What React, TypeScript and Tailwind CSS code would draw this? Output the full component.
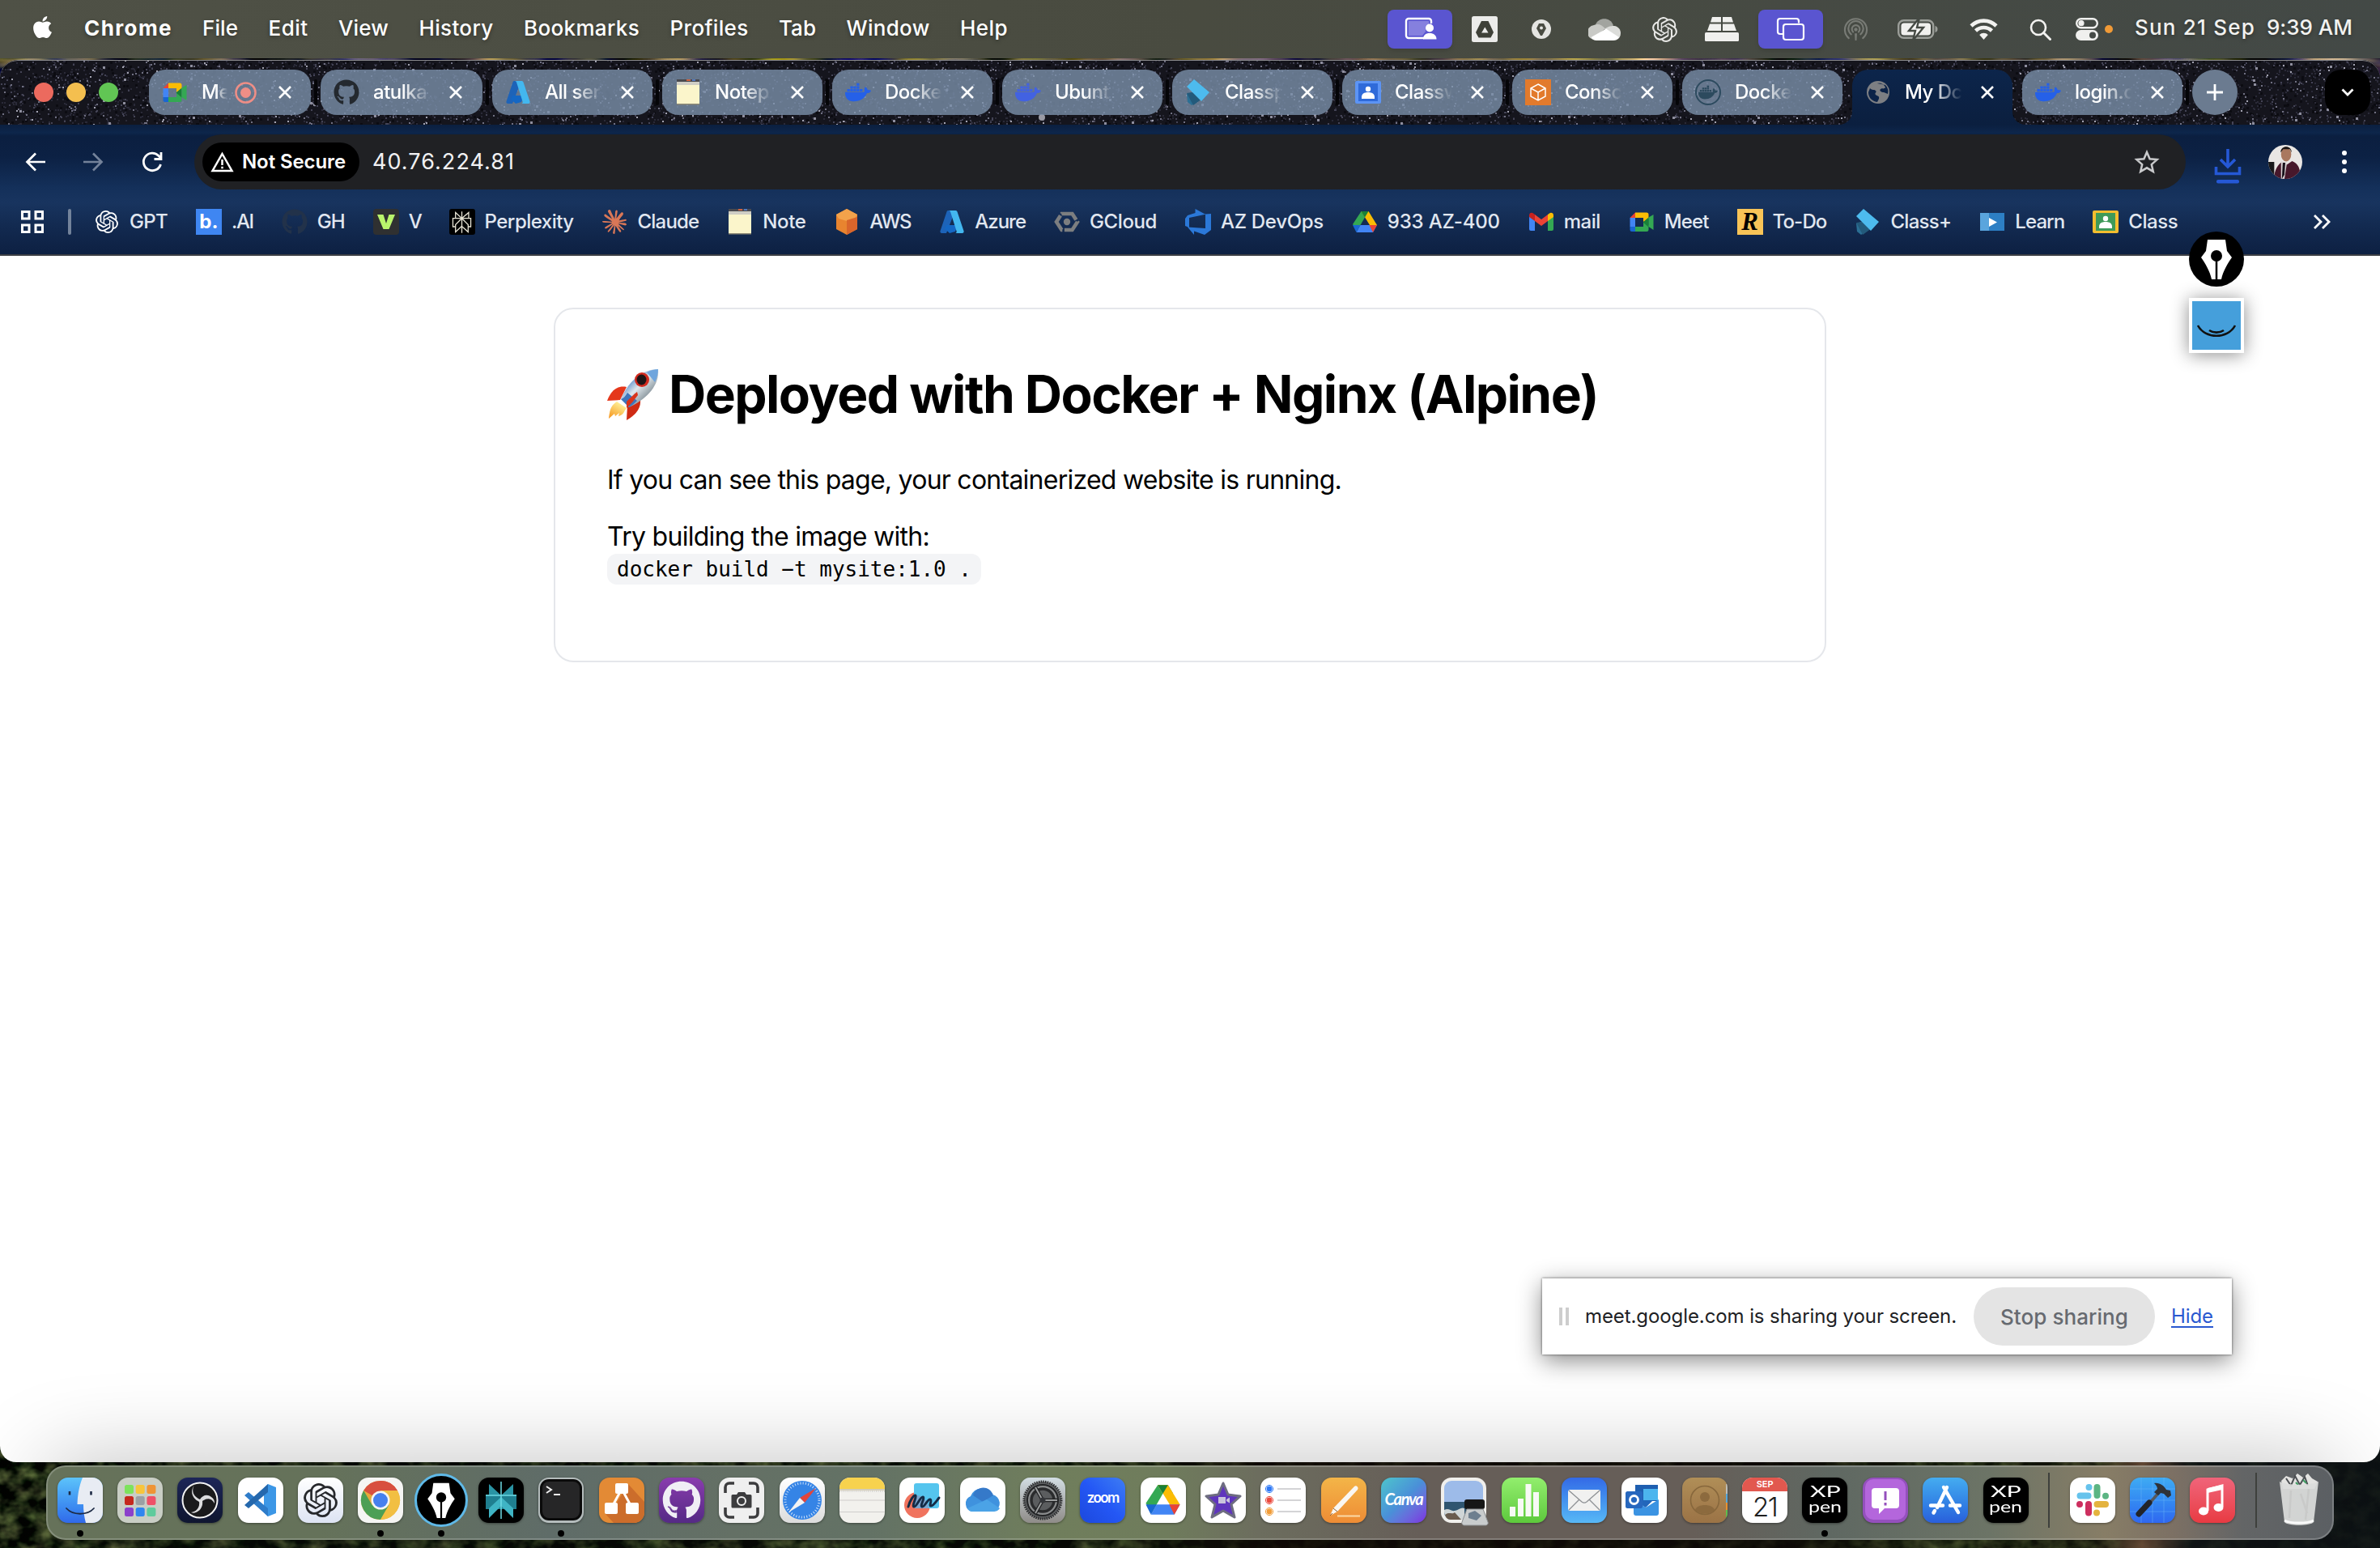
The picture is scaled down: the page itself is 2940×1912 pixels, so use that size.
import React, { useLayoutEffect, useRef, useState } from "react";
import { FaApple, FaGithub, FaDocker } from "react-icons/fa";
import { SiOpenai, SiPerplexity, SiClaude } from "react-icons/si";

type Kids = { children?: React.ReactNode; className?: string };

/** Single-line text whose tracking is adjusted so that it spans `w` pixels. */
function Fit({ w, className = "", children }: { w: number; className?: string; children: string }) {
  const ref = useRef<HTMLSpanElement>(null);
  const [ls, setLs] = useState(0);
  useLayoutEffect(() => {
    if (ref.current) setLs((w - ref.current.getBoundingClientRect().width) / children.length);
  }, []);
  return (
    <span ref={ref} className={`inline-block shrink-0 whitespace-pre ${className}`} style={{ letterSpacing: ls }}>
      {children}
    </span>
  );
}

function Svg({ children, className = "size-8", vb = "0 0 32 32" }: Kids & { vb?: string }) {
  return (
    <svg viewBox={vb} className={`block shrink-0 ${className}`} fill="none">
      {children}
    </svg>
  );
}

/* ---------- starfield ---------- */
function rng(seed: number) {
  let s = seed;
  return () => {
    s = (s * 1664525 + 1013904223) % 4294967296;
    return s / 4294967296;
  };
}
function starPath(seed: number, n: number, size: number) {
  const r = rng(seed);
  let d = "";
  for (let i = 0; i < n; i++) {
    d += `M${(r() * 2940).toFixed(0)} ${(r() * 80).toFixed(0)}h${size}v${size}h-${size}z`;
  }
  return d;
}
const STARS = [
  { d: starPath(12, 2600, 3), fill: "#0c0c12" },
  { d: starPath(7, 5200, 2), fill: "#2a2a38" },
  { d: starPath(91, 2000, 2), fill: "#444456" },
  { d: starPath(33, 900, 2), fill: "#707082" },
  { d: starPath(58, 260, 2), fill: "#a2a2b0" },
  { d: starPath(77, 110, 3), fill: "#8e8e9e" },
];
function Stars() {
  return (
    <svg viewBox="0 0 2940 80" className="absolute inset-0 h-20 w-[2940px]">
      {STARS.map((s) => (
        <path key={s.fill} d={s.d} fill={s.fill} />
      ))}
      <circle cx="1287" cy="71" r="4" fill="#9a9aa4" />
    </svg>
  );
}

/* ---------- shared logos ---------- */
const MeetIcon = () => (
  <Svg>
    <path d="M1.500 11L8 4.500V11z" fill="#e94335" />
    <path d="M8 4.500h14a2.500 2.500 0 0 1 2.500 2.500v5L18 16v-5H8z" fill="#fbbc04" />
    <path d="M1.500 11H8v11H1.500z" fill="#4285f4" />
    <path d="M1.500 22H8v6H4a2.500 2.500 0 0 1-2.500-2.500z" fill="#1967d2" />
    <path d="M8 22h10v-6l6.500 4v5.500A2.500 2.500 0 0 1 22 28H8z" fill="#34a853" />
    <path d="M17.500 16.500l7-6v12z" fill="#188038" />
    <path d="M24.500 10.500L30.500 7v19l-6-4z" fill="#34a853" />
  </Svg>
);
const AzureIcon = () => (
  <Svg>
    <path d="M11 2h9L9 30H3.500a2 2 0 0 1-2-2.700L9.500 3.500A2 2 0 0 1 11 2z" fill="#1d63b8" />
    <path d="M9 20h14l-3 8-7 2-6-5.500z" fill="#1467c4" />
    <path d="M12 2h8.500a2 2 0 0 1 2 1.500l8 23.800a2 2 0 0 1-2 2.700H20c1.500 0 2-1.500 1.500-2.700L14 3.500A2 2 0 0 0 12 2z" fill="#43b7ef" />
  </Svg>
);
const NoteIcon = () => (
  <Svg>
    <rect x="2" y="0" width="28" height="31" fill="#fbf5cb" />
    <rect x="2" y="0" width="28" height="3" fill="#4a4a4e" />
    <rect x="14" y="0" width="5" height="2" fill="#d0623f" />
    <rect x="21" y="0" width="4" height="2" fill="#5279c0" />
    <rect x="2" y="3" width="28" height="4" fill="#cfcdc4" />
    <rect x="2" y="30" width="28" height="1.500" fill="#8b8875" />
  </Svg>
);
const ClassplusIcon = () => (
  <Svg>
    <path d="M2 18l6-2 9 4 4 2-13 10-5-4z" fill="#2b6f94" />
    <path d="M2 17l8-1 11 8-11 8z" fill="#235a7b" />
    <path d="M11 0L30 16 20 27 2 9z" fill="#4dbbee" />
  </Svg>
);
const ClassroomIcon = ({ a, b }: { a: string; b: string }) => (
  <Svg>
    <rect y="2" width="32" height="28" rx="2" fill={a} />
    <rect x="4" y="5" width="24" height="22" fill={b} />
    <circle cx="16" cy="12" r="3.200" fill="#fff" />
    <path d="M8 22c0-4 3-6 8-6s8 2 8 6v2H8z" fill="#fff" />
  </Svg>
);
const DriveIcon = ({ className = "size-8" }: { className?: string }) => (
  <Svg className={className}>
    <path d="M11.500 3h9L25 10.500h-9z" fill="#188038" />
    <path d="M11.500 3L16 10.500 6.500 27 1 19z" fill="#34a853" />
    <path d="M11.500 3h9l10.500 17H22z" fill="#fbbc04" />
    <path d="M11.500 3h9L16 10.500z" fill="#188038" />
    <path d="M10.500 20H31l-5 9H5.500z" fill="#4285f4" />
    <path d="M1 20h9.500L5.500 29z" fill="#1967d2" />
    <path d="M21.500 20H31l-5 9z" fill="#ea4335" />
  </Svg>
);
const Pen = ({ className = "" }: { className?: string }) => (
  <Svg className={className} vb="0 0 68 68">
    <path d="M23 10h22l2 14 6 8c-5 7-11 17-13 27H28c-2-10-8-20-13-27l6-8z" fill="#fff" />
    <circle cx="34" cy="30" r="7" fill="#000" />
    <path d="M34 30v30" stroke="#000" strokeWidth="2.500" />
  </Svg>
);

/* ---------- menu bar ---------- */
const MENUS: [string, number][] = [
  ["File", 44], ["Edit", 49], ["View", 62], ["History", 92], ["Bookmarks", 143],
  ["Profiles", 97], ["Tab", 46], ["Window", 103], ["Help", 59],
];
function MenuBar() {
  return (
    <header className="flex h-[72px] shrink-0 items-center bg-linear-to-r from-[#4f5146] via-[#494b40] to-[#434946] pr-[34px] pb-[4px] pl-[37px] text-[26px] font-medium text-white [text-shadow:0_2px_5px_rgba(0,0,0,0.35)]">
      <FaApple className="mb-[2px] size-[31px] drop-shadow" />
      <Fit w={109} className="ml-[36px] font-bold">Chrome</Fit>
      <nav className="ml-[37px] flex gap-[37.500px]">
        {MENUS.map(([t, w]) => (
          <Fit key={t} w={w}>{t}</Fit>
        ))}
      </nav>
      <div className="mt-[4px] ml-auto flex items-center">
        <div className="flex h-12 w-20 items-center justify-center rounded-[8px] bg-[#5a55d0] shadow-md">
          <Svg className="h-8 w-11" vb="0 0 44 32">
            <path d="M36 9V6a3 3 0 0 0-3-3H8a3 3 0 0 0-3 3v18a3 3 0 0 0 3 3h19" stroke="#fff" strokeWidth="2.400" />
            <path d="M8 6h25v4l-4 3v6l-4 5H8z" fill="#8580de" />
            <circle cx="34" cy="14.500" r="5" fill="#fff" />
            <path d="M26 28.500c0-5 3-7.500 8-7.500s8.500 2.500 8.500 7.500z" fill="#fff" />
          </Svg>
        </div>
        <Svg className="ml-6 size-8">
          <rect width="32" height="32" rx="2.500" fill="#ececea" />
          <path d="M12 6h8.500L27 20l-3.500 6.500h-15L5 20z" fill="#3f4138" />
          <path d="M16.300 13.500l4.200 7h-8.400z" fill="#ececea" />
        </Svg>
        <Svg className="ml-[42px] size-6" vb="0 0 24 24">
          <circle cx="12" cy="12" r="12" fill="#e5e5e2" />
          <path d="M9 5h6l3 6-5 9h-2l-5-9z" fill="#4a4c43" />
          <circle cx="12" cy="10.500" r="2" fill="#e5e5e2" />
        </Svg>
        <Svg className="ml-[46px] h-7 w-10" vb="0 0 40 28">
          <path d="M9 8.500C12-.5 27-2 31 9.500L21 14z" fill="#a2a49f" />
          <path d="M9 27a9 9 0 0 1-2-18c5-2.500 10-.5 14 4.500L6 25z" fill="#c9cac6" />
          <path d="M20 14c5-4 9-4 12-4 5 .5 8 4.500 8 9 0 4-2 6.500-4 7.500z" fill="#dcddda" />
          <path d="M3.500 24L22 13.500 38 24c-2 3-4 4-7 4H10c-3 0-5-1.500-6.500-4z" fill="#fff" />
        </Svg>
        <SiOpenai className="ml-[39px] size-[31px] text-[#e8e8e6]" />
        <Svg className="ml-[34px] h-[30px] w-[42px]" vb="0 0 42 30">
          <path d="M9 0h11v6.500H7zM22 0h11l2 6.500H22zM6 8.500h14V17H3zM22 8.500h14l3 8.500H22z" fill="#f0f0ee" />
          <rect y="19" width="42" height="11" rx="1.500" fill="#f0f0ee" />
        </Svg>
        <div className="ml-6 flex h-12 w-20 items-center justify-center rounded-[8px] bg-[#5a55d0] shadow-md">
          <Svg className="h-[30px] w-9" vb="0 0 36 30">
            <path d="M8.500 21H5a3 3 0 0 1-3-3V5a3 3 0 0 1 3-3h20a3 3 0 0 1 3 3v2.500" stroke="#fff" strokeWidth="2.200" />
            <rect x="9" y="9" width="25" height="19" rx="3" stroke="#fff" strokeWidth="2.200" />
          </Svg>
        </div>
        <Svg className="ml-[25px] size-[31px]">
          <g stroke="#787b75" strokeWidth="2.200" strokeLinecap="round">
            <path d="M7 27a14 14 0 1 1 18 0" />
            <path d="M10 22a9.500 9.500 0 1 1 12 0" />
            <path d="M12.500 19a5 5 0 1 1 7 0" />
          </g>
          <circle cx="16" cy="16" r="2.200" fill="#787b75" />
          <path d="M14.500 21h3l-.5 9h-2z" fill="#787b75" />
        </Svg>
        <Svg className="ml-9 h-[28px] w-[50px]" vb="0 0 50 28">
          <rect x="1.200" y="3.200" width="43" height="21.600" rx="6.500" stroke="#9b9e99" strokeWidth="2.400" />
          <path d="M46.500 10v8c2-.6 3-2 3-4s-1-3.400-3-4z" fill="#9b9e99" />
          <rect x="4.500" y="6.500" width="36.500" height="15" rx="3.500" fill="#f0f0ee" />
          <path d="M27 0L14 16h8l-3 12 13-16h-8z" fill="#f4f4f2" stroke="#454a44" strokeWidth="2.400" />
        </Svg>
        <Svg className="ml-[39px] h-[27px] w-[35px]" vb="0 0 35 27">
          <path d="M2 9a22 22 0 0 1 31 0" stroke="#f2f2f0" strokeWidth="4.600" />
          <path d="M7.500 15a14.500 14.500 0 0 1 20 0" stroke="#f2f2f0" strokeWidth="4.600" />
          <path d="M17.500 26l-5.300-6a7.500 7.500 0 0 1 10.600 0z" fill="#f2f2f0" />
        </Svg>
        <Svg className="ml-[39px] size-[27px]" vb="0 0 27 27">
          <circle cx="11" cy="11" r="9" stroke="#f2f2f0" strokeWidth="2.600" />
          <path d="M17.500 17.500l8 8" stroke="#f2f2f0" strokeWidth="3" strokeLinecap="round" />
        </Svg>
        <Svg className="ml-[30px] size-7" vb="0 0 28 28">
          <rect x="1.200" y="1.200" width="25.600" height="11" rx="5.500" stroke="#f0f0ee" strokeWidth="2.400" />
          <circle cx="7" cy="6.700" r="3.600" fill="#f0f0ee" />
          <rect y="15" width="28" height="13" rx="6.500" fill="#f0f0ee" />
          <circle cx="21" cy="21.500" r="4" fill="#454a46" />
        </Svg>
        <span className="ml-[8px] size-[10px] rounded-full bg-[#f09a37]" />
        <Fit w={149} className="mb-[5px] ml-[27px] text-[#f2f2f0]">Sun 21 Sep</Fit>
        <Fit w={106} className="mb-[5px] ml-[14px] text-[#f2f2f0]">9:39 AM</Fit>
      </div>
    </header>
  );
}

/* ---------- tab strip ---------- */
const Close = () => (
  <Svg className="size-[18px]" vb="0 0 18 18">
    <path d="M2 2l14 14M16 2L2 16" stroke="#fff" strokeWidth="2.600" />
  </Svg>
);
const Sep = () => <span className="mx-1 h-8 w-1 shrink-0 rounded bg-[#050508]" />;
function Tab({ icon, title, active, rec, wide }: { icon: React.ReactNode; title: string; active?: boolean; rec?: boolean; wide?: boolean }) {
  return (
    <div
      className={`relative flex shrink-0 items-center pl-4 ${wide ? "w-[200px]" : "w-[198px]"} ${
        active ? "h-[68px] self-end rounded-t-[20px] bg-linear-to-b from-[#0c254b] to-[#0b1f3f] pb-3" : "h-14 rounded-[20px] bg-[#7b90aa]/80"
      }`}
    >
      <span className="flex size-8 items-center justify-center">{icon}</span>
      <span
        className={`ml-[17px] flex h-8 items-center text-[24px] leading-8 font-medium whitespace-nowrap text-white ${
          rec
            ? "w-[32px] [mask-image:linear-gradient(to_right,black_55%,transparent)]"
            : "w-[72px] [mask-image:linear-gradient(to_right,black_50%,transparent_98%)]"
        }`}
      >
        <span className="pb-[1px] -tracking-[0.5px]">{title}</span>
      </span>
      {rec && (
        <Svg className="ml-[9px] size-[27px]" vb="0 0 27 27">
          <circle cx="13.500" cy="13.500" r="12" stroke="#ee8e86" strokeWidth="2.600" />
          <circle cx="13.500" cy="13.500" r="6.500" fill="#ee8e86" />
        </Svg>
      )}
      <span className={rec ? "ml-[26px]" : "ml-[21px]"}>
        <Close />
      </span>
      {active && (
        <>
          <svg className="absolute bottom-0 -left-4 size-4" viewBox="0 0 16 16"><path d="M16 0v16H0A16 16 0 0 0 16 0z" fill="#0b1f3f" /></svg>
          <svg className="absolute -right-4 bottom-0 size-4" viewBox="0 0 16 16"><path d="M0 0v16h16A16 16 0 0 1 0 0z" fill="#0b1f3f" /></svg>
        </>
      )}
    </div>
  );
}
const Whale = ({ c }: { c: string }) => <FaDocker className={`size-8 ${c}`} />;
function TabStrip() {
  return (
    <div className="relative h-20 shrink-0 overflow-hidden rounded-t-[22px] bg-[#15151d]">
      <Stars />
      <div className="relative flex h-20 items-center">
        <div className="flex w-[184px] shrink-0 gap-4 pl-[42px]">
          <span className="size-6 rounded-full bg-[#ec6a5e]" />
          <span className="size-6 rounded-full bg-[#f4bf4f]" />
          <span className="size-6 rounded-full bg-[#61c554]" />
        </div>
        <Tab wide icon={<MeetIcon />} title="Me" rec />
        <Sep />
        <Tab wide icon={<FaGithub className="size-8 text-[#24292f]" />} title="atulka" />
        <Sep />
        <Tab icon={<AzureIcon />} title="All ser" />
        <Sep />
        <Tab icon={<NoteIcon />} title="Notep" />
        <Sep />
        <Tab icon={<Whale c="text-[#2560e8]" />} title="Docke" />
        <Sep />
        <Tab icon={<Whale c="text-[#4262e2]" />} title="Ubunt" />
        <Sep />
        <Tab icon={<ClassplusIcon />} title="Classp" />
        <Sep />
        <Tab icon={<ClassroomIcon a="#5c94f5" b="#2f6ad9" />} title="Classw" />
        <Sep />
        <Tab
          icon={
            <Svg>
              <rect width="32" height="32" fill="#e27a2c" />
              <path d="M16 6l9 5v10l-9 5-9-5V11zM7 11l9 5 9-5M16 16v10" stroke="#fff" strokeWidth="1.500" />
            </Svg>
          }
          title="Consc"
        />
        <Sep />
        <Tab
          icon={
            <span className="flex size-8 items-center justify-center rounded-full border-2 border-[#2c4a5e]">
              <FaDocker className="size-6 text-[#2c4a5e]" />
            </span>
          }
          title="Docke"
        />
        <span className="w-3 shrink-0" />
        <Tab
          active
          icon={
            <Svg className="size-7" vb="0 0 28 28">
              <circle cx="14" cy="14" r="14" fill="#7d7f83" />
              <path d="M4 9c3 3 5 1 7 3s-2 3 0 5 5 1 4 5l-2 4C6 25 2 20 2 14zM13 3c5-1 9 2 10 5-2 3-4 0-6 2s1 4 4 4l5 2c1-4 0-8-3-11z" fill="#0c2348" />
            </Svg>
          }
          title="My Dc"
        />
        <span className="w-3 shrink-0" />
        <Tab icon={<Whale c="text-[#2560e8]" />} title="login.c" />
        <Sep />
        <span className="flex size-14 shrink-0 items-center justify-center rounded-full bg-[#6b7b90]">
          <Svg className="size-5" vb="0 0 20 20">
            <path d="M10 0v20M0 10h20" stroke="#fff" strokeWidth="2.800" />
          </Svg>
        </span>
        <span className="mr-3 ml-auto flex size-14 shrink-0 items-center justify-center rounded-[20px] bg-black">
          <Svg className="size-4" vb="0 0 16 16">
            <path d="M1.500 4.500L8 11l6.500-6.500" stroke="#fff" strokeWidth="2.800" />
          </Svg>
        </span>
      </div>
      <div className="absolute inset-0 rounded-t-[22px] border-t-[1.500px] border-[#8d8d90]" />
    </div>
  );
}

/* ---------- toolbar ---------- */
function Toolbar() {
  return (
    <div className="flex h-[92px] shrink-0 items-center pl-[30px]">
      <Svg className="size-7" vb="0 0 28 28">
        <path d="M26 14H4M14 3.500L3.500 14 14 24.500" stroke="#fff" strokeWidth="2.700" />
      </Svg>
      <Svg className="ml-[43px] size-7" vb="0 0 28 28">
        <path d="M2 14h22M14 3.500L24.500 14 14 24.500" stroke="#74829a" strokeWidth="2.700" />
      </Svg>
      <Svg className="ml-[45px] size-7" vb="0 0 28 28">
        <path d="M24.500 17A10.800 10.800 0 1 1 22 6.500l3 3M25 2v8.500h-8.500" stroke="#fff" strokeWidth="2.800" />
      </Svg>
      <div className="ml-[38px] flex h-[68px] w-[2460px] items-center rounded-full bg-[#202124] pr-[32px] pl-[10px]">
        <div className="flex h-12 w-[194px] items-center rounded-full bg-black pl-[10px]">
          <Svg className="h-[26px] w-[29px]" vb="0 0 29 26">
            <path d="M14.500 3L26.500 24H2.500z" stroke="#fff" strokeWidth="2.500" />
            <path d="M14.500 10v7M14.500 18.800v2.500" stroke="#fff" strokeWidth="2.500" />
          </Svg>
          <Fit w={128} className="ml-[10px] text-[24px] font-semibold text-white">Not Secure</Fit>
        </div>
        <Fit w={176} className="ml-[16px] text-[27px] text-[#f1f1f3]">40.76.224.81</Fit>
        <Svg className="ml-auto size-8">
          <path d="M16 4l3.600 8.300 9 .8-6.800 6 2 8.800L16 23.300 8.200 27.900l2-8.800-6.800-6 9-.8z" stroke="#c9cacc" strokeWidth="2.500" />
        </Svg>
      </div>
      <Svg className="mt-[12px] ml-[34px] h-[44px] w-9" vb="0 0 36 44">
        <path d="M18 0v20M9 13l9 9 9-9M3.500 22v8.500h29V22" stroke="#2558d6" strokeWidth="3.600" />
        <rect x="4" y="38" width="28" height="4.500" rx="2" fill="#2558d6" />
      </Svg>
      <Svg className="ml-[32px] size-[42px]" vb="0 0 40 40">
        <clipPath id="av"><circle cx="20" cy="20" r="20" /></clipPath>
        <g clipPath="url(#av)">
          <rect width="40" height="40" fill="#e9e6e4" />
          <path d="M0 20h7v20H0z" fill="#18181a" />
          <path d="M7 40c0-12 5-17 9-20l6 3 6-4c7 3 10 8 10 21z" fill="#47182b" />
          <path d="M15 19l7 2-3 19h-4z" fill="#dcd5d6" />
          <path d="M17 21h3l-1 14-3 5z" fill="#171019" />
          <ellipse cx="21" cy="11" rx="6" ry="8.500" fill="#a9785f" />
          <path d="M14.500 9c0-9 13-9 13 0l-2-4h-8z" fill="#1a1412" />
        </g>
      </Svg>
      <Svg className="ml-[47px] h-7 w-[10px]" vb="0 0 10 28">
        <g fill="#fff"><circle cx="5" cy="3" r="3" /><circle cx="5" cy="14" r="3" /><circle cx="5" cy="25" r="3" /></g>
      </Svg>
    </div>
  );
}

const BOOKMARKS: [string, number, React.ReactNode][] = [
  ["GPT", 47, <SiOpenai className="size-7 text-white" />],
  [".AI", 27, <span className="flex size-8 items-center justify-center bg-[#3f86f2] text-[24px] font-bold text-white">b.</span>],
  ["GH", 34, <FaGithub className="size-8 text-[#22324a]" />],
  ["V", 15, <Svg><rect width="32" height="32" rx="4" fill="#2f3031" /><path d="M5 7h7.500L16 18l3.500-11H27l-7.500 18h-7z" fill="#b9f46c" /></Svg>],
  ["Perplexity", 110, <span className="flex size-8 items-center justify-center rounded-[3px] bg-black"><SiPerplexity className="size-[27px] text-[#e8e4d6]" /></span>],
  ["Claude", 76, <SiClaude className="size-[30px] text-[#d97757]" />],
  ["Note", 53, <NoteIcon />],
  ["AWS", 51, <Svg><path d="M16 0l13 7v18l-13 7-13-7V7z" fill="#e8842f" /><path d="M16 0l13 7-3 5-10 3-10-3-3-5z" fill="#f2a24b" /><path d="M16 14l13-4v15l-13 7z" fill="#d9652b" /></Svg>],
  ["Azure", 63, <AzureIcon />],
  ["GCloud", 83, <Svg><path d="M9.500 6h13L29 16l-6.500 10h-13L3 16z" stroke="#7c7e80" strokeWidth="4.600" strokeDasharray="22 2.500" /><circle cx="16" cy="16" r="4.200" fill="#7c7e80" /></Svg>],
  ["AZ DevOps", 127, <Svg><path d="M32 6v20l-8 6-13-4.500V32L3 22.500 25 24V6.500zM25 6.800L12.500 0v5L3 8l-3 4v9l5 2V11z" fill="#2b78d8" /></Svg>],
  ["933 AZ-400", 139, <DriveIcon />],
  ["mail", 45, <Svg><path d="M1 8v17a2 2 0 0 0 2 2h5V13z" fill="#4285f4" /><path d="M24 13v14h5a2 2 0 0 0 2-2V8z" fill="#34a853" /><path d="M24 7l-8 6-8-6v8l8 6 8-6z" fill="#ea4335" /><path d="M24 7l2-1.500C28 4 31 5 31 8v2l-7 5z" fill="#fbbc04" /><path d="M8 7L6 5.500C4 4 1 5 1 8v2l7 5z" fill="#c5221f" /></Svg>],
  ["Meet", 55, <MeetIcon />],
  ["To-Do", 67, <span className="flex size-8 items-center justify-center bg-[#f8c457] font-['Liberation_Serif'] text-[31px] leading-8 font-bold text-black italic">R</span>],
  ["Class+", 75, <ClassplusIcon />],
  ["Learn", 61, <Svg><rect x="1" y="5" width="30" height="22" fill="#2d7fc4" /><rect x="1" y="5" width="11" height="22" fill="#5aa5dd" /><path d="M12 11l10 5.500L12 22z" fill="#fff" /></Svg>],
  ["Class", 61, <ClassroomIcon a="#f3bd2f" b="#3f9a58" />],
];
function BookmarksBar() {
  return (
    <div className="flex h-[68px] shrink-0 items-center pb-[12px] pl-[25px] text-[24px] font-medium text-[#e1e7f0]">
      <Svg className="size-[30px]" vb="0 0 30 30">
        <path d="M2.500 2.500h8.500v8.500H2.500zM19 2.500h8.500v8.500H19zM2.500 19h8.500v8.500H2.500zM19 19h8.500v8.500H19z" stroke="#fff" strokeWidth="3" />
      </Svg>
      <span className="mr-[28px] ml-[29px] h-8 w-1 rounded bg-[#73839b]" />
      <div className="flex gap-[34.900px]">
        {BOOKMARKS.map(([label, w, icon]) => (
          <div key={label} className="flex items-center gap-[12px]">
            <span className="flex size-8 shrink-0 items-center justify-center">{icon}</span>
            <Fit w={w}>{label}</Fit>
          </div>
        ))}
      </div>
      <Svg className="mr-[61px] ml-auto size-[22px]" vb="0 0 22 22">
        <path d="M2 3l8 8-8 8M12 3l8 8-8 8" stroke="#fff" strokeWidth="2.800" />
      </Svg>
    </div>
  );
}

/* ---------- page ---------- */
const Rocket = () => (
  <Svg className="size-16" vb="0 0 64 64">
    <defs>
      <linearGradient id="rb" x1="24" y1="16" x2="48" y2="40" gradientUnits="userSpaceOnUse">
        <stop stopColor="#4f86c8" /><stop offset=".45" stopColor="#dfe7ec" /><stop offset="1" stopColor="#7e8b93" />
      </linearGradient>
      <linearGradient id="rf" x1="16" y1="42" x2="4" y2="62" gradientUnits="userSpaceOnUse">
        <stop stopColor="#fff29a" /><stop offset="1" stopColor="#f6961d" />
      </linearGradient>
    </defs>
    <path d="M24 23c-12-2-19 4-24 17l16-1z" fill="#e5371b" />
    <path d="M41 39c1 10-5 18-17 25l1-18z" fill="#cf2b14" />
    <path d="M12 41l12 8c-4 5-3 8-10 10l1-4-5 4-1-3-7 6c1-9 2-16 10-21z" fill="url(#rf)" />
    <path d="M63 1C45 1 27 14 17 38l10 10c20-9 38-26 36-47z" fill="url(#rb)" />
    <path d="M63 1c-5 0-9 1-14 4l10 12c3-5 4-11 4-16z" fill="#6fa5dd" />
    <path d="M27 48L17 38c3-1 6-4 8-8l12 10c-3 3-6 6-10 8z" fill="#3f76bb" />
    <ellipse cx="43" cy="14" rx="9" ry="9" fill="#d12a1f" />
    <ellipse cx="42.500" cy="14" rx="6" ry="6.500" fill="#1d1416" />
    <path d="M24 41c4-4 9-9 13-12l1 4-7 9-7 7z" fill="#d9341b" />
  </Svg>
);
function Page() {
  return (
    <main className="relative flex flex-1 justify-center overflow-hidden rounded-b-[20px] bg-white">
      <section className="mt-[64px] h-[438px] w-[1572px] rounded-[24px] border-2 border-[#e5e7eb] px-[64px] pt-[69px] text-black">
        <h1 className="flex h-[72px] items-center text-[64px] leading-[72px] font-bold">
          <Rocket />
          <Fit w={1148} className="ml-[12px]">Deployed with Docker + Nginx (Alpine)</Fit>
        </h1>
        <p className="mt-[50px] h-10 text-[32px] leading-10">
          <Fit w={907}>If you can see this page, your containerized website is running.</Fit>
        </p>
        <p className="mt-[30px] h-10 text-[32px] leading-10">
          <Fit w={398}>Try building the image with:</Fit>
        </p>
        <code className="mt-[1px] flex h-[38px] w-[462px] items-center rounded-[12px] bg-[#f3f4f6] px-3 font-['DejaVu_Sans_Mono',monospace] text-[26px]">
          <Fit w={438}>docker build −t mysite:1.0 .</Fit>
        </code>
      </section>
    </main>
  );
}

function ShareBar() {
  return (
    <div className="absolute top-[1579px] left-[1905px] flex h-[94px] w-[852px] items-center bg-white pl-[21px] text-[24px] text-[#202124] shadow-[0_0_3px_rgba(0,0,0,0.6),0_8px_28px_rgba(0,0,0,0.45)]">
      <span className="h-[22px] w-1 bg-[#cdcdcd]" />
      <span className="ml-1 h-[22px] w-1 bg-[#cdcdcd]" />
      <Fit w={459} className="ml-5">meet.google.com is sharing your screen.</Fit>
      <span className="ml-[21px] flex h-[72px] w-[224px] items-center justify-center rounded-full bg-[#e4e4e4] text-[26px] font-medium text-[#666a70]">
        <Fit w={158}>Stop sharing</Fit>
      </span>
      <Fit w={52} className="ml-5 text-[#2a58d0] underline decoration-2 underline-offset-4">Hide</Fit>
    </div>
  );
}

function FloatingTools() {
  return (
    <div className="absolute top-[286px] left-[2704px] flex flex-col gap-[14px]">
      <span className="size-[68px] rounded-full bg-black"><Pen className="size-[68px]" /></span>
      <span className="size-[68px] border-4 border-white bg-[#459fdb] shadow-[0_2px_22px_rgba(0,0,0,0.45)]">
        <Svg className="size-[60px]" vb="0 0 60 60">
          <path d="M7 30c9 17 37 17 46 0M21 36c5 3.500 13 3.500 18 0" stroke="#111" strokeWidth="2.600" />
        </Svg>
      </span>
    </div>
  );
}

/* ---------- dock ---------- */
function Tile({ bg, children, dot, svg = true }: { bg: string; children?: React.ReactNode; dot?: boolean; svg?: boolean }) {
  return (
    <div className="relative size-14 shrink-0">
      <div className={`flex size-14 items-center justify-center overflow-hidden rounded-[13px] shadow-[0_1px_3px_rgba(0,0,0,0.4)] ${bg}`}>
        {svg ? <Svg className="size-14" vb="0 0 56 56">{children}</Svg> : children}
      </div>
      {dot && <Dot />}
    </div>
  );
}
const Dot = () => <span className="absolute -bottom-[17px] left-6 size-2 rounded-full bg-black" />;
const PAD = ["#7de35c", "#f7c53b", "#ef9435", "#c5281d", "#9ba0a4", "#ee5068", "#8b40cb", "#2f86f0", "#5fcb9c"];
const XP = ({ dot }: { dot?: boolean }) => (
  <Tile bg="bg-black" svg={false} dot={dot}>
    <span className="mb-[3px] flex flex-col items-center font-['Lato'] text-white">
      <span className="scale-x-[1.600] text-[19px] leading-[19px]">XP</span>
      <span className="scale-x-[1.250] text-[20px] leading-[19px]">pen</span>
    </span>
  </Tile>
);
const Rule = ({ className = "" }: Kids) => <span className={`h-[68px] w-[2px] shrink-0 bg-[#3e403c] ${className}`} />;

function Dock() {
  return (
    <div className="relative mt-1 ml-[57px] flex h-[92px] w-[2826px] shrink-0 items-center gap-[18.350px] rounded-[24px] border-2 border-white/20 bg-[linear-gradient(to_right,#66725a_0%,#65725a_12%,#5f6c68_22%,#647065_30%,#637265_36%,#707e5c_44%,#6f7c5c_49%,#6c6d5e_53%,#665e58_60%,#665e58_72%,#5f6862_78%,#6c7466_85%,#877d66_90%,#7c7064_93%,#636566_96%,#5b5f63_100%)] bg-origin-border pb-[7px] pl-[11.500px] shadow-[0_0_110px_rgba(0,0,0,0.28)]">
      <Tile bg="bg-linear-to-b from-[#5dc3fa] to-[#3169ea]" dot>
        <path d="M31 0c-4 10-6 20-6.500 33H32c0 8 1 16 3 23h21V0z" fill="#e8ecf3" />
        <path d="M15 17v4.500M41.500 17v4.500" stroke="#1d2b45" strokeWidth="2.600" />
        <path d="M11 38c8 9 26 9 34 0" stroke="#1d2b45" strokeWidth="1.800" strokeLinecap="round" />
      </Tile>
      <Tile bg="bg-[#c9cec5]">
        {PAD.map((c, i) => (
          <rect key={c} x={9 + (i % 3) * 13.7} y={9 + Math.floor(i / 3) * 14} width="11" height="11" rx="2.500" fill={c} />
        ))}
      </Tile>
      <Tile bg="bg-linear-to-b from-[#1d2658] to-[#0f1630]">
        <circle cx="28" cy="28" r="21.500" fill="#1a1a1c" stroke="#f2f2f2" strokeWidth="2" />
        <path d="M21 9c-4 8-1 14 7 18 3-5 9-7 14-3 3 2 4 4 4 8-3-6-8-8-15-3 1 7-3 12-8 14-2 1-4 1-6 0 7-1 11-6 10-13-8-4-12-12-6-21z" fill="#dcdcde" />
      </Tile>
      <Tile bg="bg-white">
        <path d="M37 8l10 4v32l-10 4-5-5V13z" fill="#3c97e6" />
        <path d="M8 22l5-4 24 20v10z" fill="#2e7cc9" />
        <path d="M8 34l5 4 24-20V8z" fill="#2568ad" />
      </Tile>
      <Tile bg="bg-linear-to-b from-white to-[#dde3f3]" svg={false}><SiOpenai className="size-[42px] text-[#26282c]" /></Tile>
      <Tile bg="bg-[#f5f5f3]" dot>
        <circle cx="28" cy="28" r="24" fill="#e5a93a" />
        <path d="M28 28L7.200 16A24 24 0 0 1 48.800 16z" fill="#d8503f" />
        <path d="M28 4a24 24 0 0 1 20.800 12H28z" fill="#d8503f" />
        <path d="M7.200 16A24 24 0 0 0 28 52l10.400-18L28 28 17.600 34z" fill="#4c9f55" />
        <path d="M28 16h20.800A24 24 0 0 1 28 52l10.400-18z" fill="#f2bf42" />
        <circle cx="28" cy="28" r="11.500" fill="#f5f5f3" />
        <circle cx="28" cy="28" r="9" fill="#4680ee" />
      </Tile>
      <div className="relative size-14 shrink-0">
        <div className="-m-[5px] size-[66px] rounded-full border-[3px] border-[#5fb9e8] bg-black"><Pen className="size-[60px]" /></div>
        <Dot />
      </div>
      <Tile bg="bg-black">
        <path d="M28 22L13 8v17h15zM28 22L43 8v17H28z" fill="#2a94a4" />
        <path d="M9 21h19v18H9zM28 21h19v18H28z" fill="#1f7f90" />
        <path d="M28 24L13 38v12l15-15 15 15V38z" fill="#3fb4c4" />
        <path d="M28 5v46M9 22h38" stroke="#6fdde6" strokeWidth="1.500" />
      </Tile>
      <Tile bg="bg-[#b4bcbc]" dot>
        <rect x="2" y="2" width="52" height="51" rx="11" fill="#0a0a0a" />
        <rect x="5" y="5" width="46" height="45" rx="8" fill="#262627" />
        <path d="M10 11l6 4-6 4M19 21h8" stroke="#f0f0f0" strokeWidth="2" />
      </Tile>
      <Tile bg="bg-[#e38a35]">
        <path d="M36 8l20 22v26H18L8 45l14-14z" fill="#cc6d2b" />
        <path d="M28 14L15 38M28 14l13 24" stroke="#fff" strokeWidth="3" />
        <rect x="20" y="7" width="16" height="13" rx="2" fill="#fff" />
        <rect x="7" y="31" width="16" height="14" rx="2" fill="#fff" />
        <rect x="33" y="31" width="16" height="14" rx="2" fill="#fff" />
      </Tile>
      <Tile bg="bg-linear-to-b from-[#8a3cae] to-[#552a85]" svg={false}><FaGithub className="size-12 text-[#f0eff5]" /></Tile>
      <Tile bg="bg-[#efefef]">
        <path d="M8 19v-7a5 5 0 0 1 5-5h6M37 7h6a5 5 0 0 1 5 5v7M48 37v7a5 5 0 0 1-5 5h-6M19 49h-6a5 5 0 0 1-5-5v-7" stroke="#3c3c3e" strokeWidth="3.600" />
        <path d="M17 21h5l2-3h8l2 3h5a1.500 1.500 0 0 1 1.500 1.500V36a1.500 1.500 0 0 1-1.500 1.500H17a1.500 1.500 0 0 1-1.500-1.500V22.500A1.500 1.500 0 0 1 17 21z" fill="#3c3c3e" />
        <circle cx="28" cy="29" r="5" stroke="#efefef" strokeWidth="2" />
      </Tile>
      <Tile bg="bg-linear-to-b from-white to-[#dcdcdc]">
        <circle cx="28" cy="28" r="24" fill="#3584e6" />
        <circle cx="28" cy="28" r="21" stroke="#cfe2fa" strokeWidth="3" strokeDasharray="1 2.300" />
        <path d="M45 13L31 31l-6-6z" fill="#e2453c" />
        <path d="M11 43l14-18 6 6z" fill="#f3f3f3" />
      </Tile>
      <Tile bg="bg-[#f2f1ed]">
        <rect width="56" height="14" fill="#f7d24e" />
        <path d="M0 15h56" stroke="#b4a988" strokeWidth="1" />
        <path d="M0 17h56" stroke="#c9c8c4" strokeWidth="1.500" strokeDasharray="1 1.500" />
        <path d="M0 28h56M0 42.500h56" stroke="#cfcecb" strokeWidth="1.200" />
      </Tile>
      <Tile bg="bg-white">
        <circle cx="22" cy="34" r="16" fill="#f0735e" />
        <rect x="18" y="7" width="31" height="31" rx="3" fill="#55c5ee" />
        <path d="M18 22a16 16 0 0 1 18 16H21a3 3 0 0 1-3-3z" fill="#7ca6cf" />
        <path d="M11 36c2-8 7-15 9-14s-5 13-2 14 8-13 11-12-4 11-1 12 7-10 10-9-2 8 1 8 6-5 10-10" stroke="#152c46" strokeWidth="3" strokeLinecap="round" />
      </Tile>
      <Tile bg="bg-white">
        <path d="M15 42a10 10 0 0 1-2-19 15 15 0 0 1 27-2 11 11 0 0 1 2 21z" fill="#3f92de" />
        <path d="M16 22c3-11 20-14 25 0l-13 8z" fill="#3579c9" />
        <path d="M9 38l24-11 16 11c-2 3-5 4-8 4H15c-3 0-5-2-6-4z" fill="#4ba3e6" />
      </Tile>
      <Tile bg="bg-linear-to-b from-[#d3dee4] to-[#8f8c89]">
        <circle cx="28" cy="28" r="23" fill="#5d5f61" stroke="#2b2c2e" strokeWidth="3" strokeDasharray="1.500 1.200" />
        <circle cx="28" cy="28" r="19" fill="#8a8c8d" stroke="#232426" strokeWidth="2" />
        <circle cx="28" cy="28" r="14" fill="#5b5d5f" stroke="#2a2b2d" strokeWidth="3.500" />
        <path d="M28 28h18M28 28l-9-16M28 28l-9 16" stroke="#202123" strokeWidth="4.500" />
        <path d="M28 28h18M28 28l-9-16M28 28l-9 16" stroke="#9a9c9d" strokeWidth="2" />
        <circle cx="28" cy="28" r="3.500" fill="#34363a" />
      </Tile>
      <Tile bg="bg-linear-to-tr from-[#1c48dc] via-[#2457f5] to-[#3f7cf3]" svg={false}>
        <Fit w={39} className="mb-1 text-[17px] font-semibold text-white">zoom</Fit>
      </Tile>
      <Tile bg="bg-white" svg={false}><DriveIcon className="size-[45px]" /></Tile>
      <Tile bg="bg-white">
        <path d="M28 7l6 14 15 2-11 10 4 16-14-8-14 8 4-16L7 23l15-2z" fill="#5f35bd" stroke="#6e6d80" strokeWidth="3" strokeLinejoin="round" />
        <path d="M22 24h9v8h-9zM32 27l4-2.500v7L32 29z" fill="#c9c4dc" />
      </Tile>
      <Tile bg="bg-white">
        {["#2f79f6", "#eb4b3f", "#f19c38"].map((c, i) => (
          <g key={c}>
            <circle cx="11" cy={14 + i * 14} r="4.600" stroke={c} strokeWidth="1" />
            <circle cx="11" cy={14 + i * 14} r="3.400" fill={c} />
            <path d={`M21 ${14 + i * 14}h29`} stroke="#c6c6c8" strokeWidth="1.600" />
          </g>
        ))}
      </Tile>
      <Tile bg="bg-linear-to-b from-[#f3b548] to-[#ee8c35]">
        <path d="M11 47L15 38 41 11c2-2 6 1 4 4L20 42z" fill="#faf7f2" />
        <path d="M15 38l5 4M11 47l3-3" stroke="#8d5a27" strokeWidth="1" />
        <path d="M20 47.500h28" stroke="#fbd9a6" strokeWidth="1.800" />
      </Tile>
      <Tile bg="bg-linear-to-br from-[#4ec5cb] via-[#4a8fd8] to-[#7a2be0]" svg={false}>
        <Fit w={47} className="mb-1 font-['Lato'] text-[20px] font-bold text-white italic">Canva</Fit>
      </Tile>
      <div className="size-14 shrink-0">
        <Svg className="size-[60px]" vb="0 0 60 60">
          <rect width="56" height="56" rx="13" fill="#f0efec" />
          <rect x="4" y="4" width="48" height="48" rx="9" fill="#9dbbe9" />
          <path d="M4 30h48v13a9 9 0 0 1-9 9H13a9 9 0 0 1-9-9z" fill="#2f5570" />
          <path d="M4 40c6-3 8 2 13 1s8-5 12-3v14H13a9 9 0 0 1-9-9z" fill="#cfd5d6" />
          <path d="M5 46c5-4 9 0 12-3l8 9H12c-4 0-6-3-7-6z" fill="#6a5b4e" />
          <rect x="29" y="27" width="25" height="12" rx="3" fill="#161616" />
          <path d="M32 39h20l6 16c1 2-1 4-3 4H29c-2 0-4-2-3-4z" fill="#c9cccd" stroke="#8b8e90" />
          <path d="M34 44l8-3 8 6-6 6-10-3z" fill="#6e7f8f" />
        </Svg>
      </div>
      <Tile bg="bg-linear-to-b from-[#92ee6d] to-[#5dc93c]">
        <path d="M13.500 48V36M23.500 48V26M33 48V8M42.500 48V18" stroke="#f7faf5" strokeWidth="7" />
      </Tile>
      <Tile bg="bg-linear-to-b from-[#3469e6] to-[#58b8f6]">
        <rect x="8" y="15" width="40" height="26" rx="2.500" fill="#f1f1f0" />
        <path d="M9 16l16 14c2 1.600 4 1.600 6 0l16-14M9 40l13-13M47 40L34 27" stroke="#8e9194" strokeWidth="1.300" />
      </Tile>
      <Tile bg="bg-white">
        <rect x="17" y="9" width="28" height="20" fill="#1f5fb0" />
        <rect x="27" y="14" width="18" height="14" fill="#4cb5ee" />
        <path d="M15 28l15 9 16-10v17a3 3 0 0 1-3 3H18a3 3 0 0 1-3-3z" fill="#3b93e2" />
        <path d="M15 28h24l-9 9z" fill="#2266bb" />
        <rect x="5" y="17" width="21" height="21" rx="2.500" fill="#2767be" />
        <circle cx="15.500" cy="27.500" r="5" stroke="#fff" strokeWidth="2.800" />
      </Tile>
      <Tile bg="bg-linear-to-b from-[#b08e57] to-[#9b7346]">
        <path d="M54 8h2v12h-2z" fill="#bdbdb9" /><path d="M54 20h2v11h-2z" fill="#55a7da" /><path d="M54 31h2v9h-2z" fill="#e9912f" /><path d="M54 40h2v9h-2z" fill="#5cc04e" />
        <circle cx="28" cy="28" r="17.500" stroke="#87673c" strokeWidth="1.600" />
        <circle cx="28" cy="24" r="6" fill="#8c6a3e" />
        <path d="M16 40c2-8 22-8 24 0-6 6-18 6-24 0z" fill="#8c6a3e" />
      </Tile>
      <Tile bg="bg-white" svg={false}>
        <span className="flex size-14 flex-col items-center">
          <span className="flex h-[17px] w-14 items-center justify-center bg-[#e2584f] text-[11px] font-semibold text-white">SEP</span>
          <span className="mt-[3px] font-['Inter'] text-[33px] leading-[33px] font-light tracking-[-1.500px] text-[#1f1f1f]">21</span>
        </span>
      </Tile>
      <XP dot />
      <Tile bg="bg-[#9450bd]">
        <rect x="3" y="2" width="50" height="50" rx="10" fill="#b466dc" />
        <path d="M15 13h26a4 4 0 0 1 4 4v17a4 4 0 0 1-4 4H27l-7 7v-7h-5a4 4 0 0 1-4-4V17a4 4 0 0 1 4-4z" fill="#fff" />
        <path d="M28 17v11M28 31v3.500" stroke="#9450bd" strokeWidth="3" />
      </Tile>
      <Tile bg="bg-linear-to-b from-[#45acf0] to-[#2a5fdb]">
        <path d="M30 12L18 37M26 12l18 31M10 34.500h15M34 34.500h12M15 41l-1.500 2.500" stroke="#fff" strokeWidth="4.400" strokeLinecap="round" />
      </Tile>
      <XP />
      <Rule className="mr-[6.500px] ml-[6px]" />
      <Tile bg="bg-white">
        <g strokeWidth="8" strokeLinecap="round">
          <path d="M33.500 12v10M44 22.800v0" stroke="#5cb583" />
          <path d="M12.500 22.500h10M23.500 12v0" stroke="#66c3ec" />
          <path d="M23 33v10.500M12 33v0" stroke="#cd2f5f" />
          <path d="M33.500 33H44M33 43.500v0" stroke="#e4b33f" />
        </g>
      </Tile>
      <Tile bg="bg-linear-to-b from-[#3fabf3] to-[#3067f0]">
        <path d="M0 14h56M0 28h56M0 42h56M14 0v56M28 0v56M42 0v56" stroke="#6bb8f7" strokeWidth=".8" opacity=".6" />
        <path d="M39 15L24 32" stroke="#55585e" strokeWidth="3.600" />
        <path d="M24 31L11 45" stroke="#222429" strokeWidth="7" strokeLinecap="round" />
        <path d="M30 7c7-1 12 3 15 8l5 1 1 6-4 3-5-5-4-1-3 3-5-4 4-4c0-3-2-5-4-7z" fill="#2f3238" />
      </Tile>
      <Tile bg="bg-linear-to-b from-[#f0647a] to-[#e83a42]">
        <path d="M22 41V15l18-5v26" stroke="#fff" strokeWidth="3" />
        <path d="M22 13l18-4v6l-18 4z" fill="#fff" />
        <ellipse cx="17" cy="41.500" rx="6" ry="5" fill="#fff" /><ellipse cx="35.500" cy="37" rx="6" ry="5" fill="#fff" />
      </Tile>
      <Rule className="mr-[7px] ml-[6px]" />
      <Svg className="mb-[2px] -ml-[1px] h-[66px] w-14" vb="0 0 56 66">
        <path d="M6 10L12 4l8 3 6-6 7 5 6-5 5 6 7 4-4 9H8z" fill="#e3e3e1" />
        <path d="M12 7l6 9 5-12 6 11 6-10 4 11" stroke="#4b4e52" strokeWidth="2" />
        <path d="M24 12l3 3M33 9l4 4" stroke="#3e9d63" strokeWidth="2" />
        <path d="M4 11c10 5 38 5 48 0l-6 50c-4 5-32 5-36 0z" fill="#dcdddb" fillOpacity=".93" />
        <path d="M18 22l-2 34M30 26l8 24M40 20l-4 38" stroke="#c4c6c5" strokeWidth="2.500" opacity=".7" />
        <path d="M10 59c8 4 28 4 36 0" stroke="#fafafa" strokeWidth="3" />
      </Svg>
    </div>
  );
}

/* ---------- desktop ---------- */
function Wallpaper() {
  return (
    <svg className="absolute inset-0" width="2940" height="1912">
      <defs>
        <filter id="leaves" x="0" y="0" width="100%" height="100%" colorInterpolationFilters="sRGB">
          <feTurbulence type="fractalNoise" baseFrequency="0.045 0.06" numOctaves="3" seed="8" />
          <feColorMatrix values="0.800 0 0 0 -0.290  0.850 0.100 0 0 -0.330  0.500 0 0 0 -0.180  0 0 0 0 1" />
        </filter>
        <filter id="edge" x="0" y="0" width="100%" height="100%" colorInterpolationFilters="sRGB">
          <feTurbulence type="fractalNoise" baseFrequency="0.012 0.05" numOctaves="3" seed="5" />
          <feColorMatrix values="1.600 0 0 0 -0.480  1.300 0.200 0 0 -0.460  0.600 0 0.800 0 -0.440  0 0 0 0 1" />
        </filter>
        <linearGradient id="tone">
          <stop stopColor="#26331b" stopOpacity=".05" /><stop offset=".1" stopColor="#10180f" stopOpacity=".35" />
          <stop offset=".45" stopColor="#1c2614" stopOpacity=".25" /><stop offset=".53" stopColor="#150d08" stopOpacity=".8" />
          <stop offset=".75" stopColor="#120d09" stopOpacity=".8" /><stop offset=".82" stopColor="#2b3318" stopOpacity=".4" />
          <stop offset=".88" stopColor="#2b2a18" stopOpacity=".5" /><stop offset=".9" stopColor="#7a5540" stopOpacity=".85" />
          <stop offset=".92" stopColor="#151a1c" stopOpacity=".85" /><stop offset="1" stopColor="#0d1215" stopOpacity=".9" />
        </linearGradient>
      </defs>
      <rect width="2940" height="1912" fill="#11160f" />
      <rect y="1770" width="2940" height="142" filter="url(#leaves)" />
      <rect y="1770" width="2940" height="142" fill="url(#tone)" />
      <rect y="60" width="2940" height="50" filter="url(#edge)" />
    </svg>
  );
}

export default function App() {
  return (
    <div className="relative flex h-[1912px] w-[2940px] flex-col overflow-hidden bg-[#11160f] font-['Inter',sans-serif]">
      <Wallpaper />
      <div className="relative z-10 flex h-[1912px] flex-col">
        <MenuBar />
        <div className="mt-[2px] flex h-[1732px] shrink-0 flex-col">
          <TabStrip />
          <div className="flex h-[162px] shrink-0 flex-col border-b-2 border-[#3d3f45] bg-[linear-gradient(to_bottom,#0b1f3f_0,#0d264b_10px,#0b1f40_14px,#0c2144_40px,#14305a_78px,#18345f_96px,#12294f_128px,#0d2042_160px)]">
            <Toolbar />
            <BookmarksBar />
          </div>
          <Page />
        </div>
        <Dock />
      </div>
      <div className="absolute inset-0 z-20">
        <FloatingTools />
        <ShareBar />
      </div>
    </div>
  );
}
